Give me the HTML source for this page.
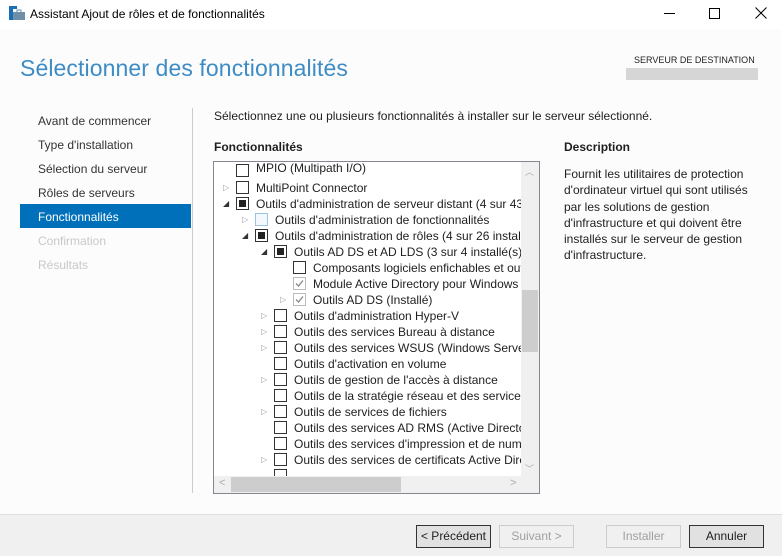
<!DOCTYPE html>
<html><head><meta charset="utf-8"><style>
*{margin:0;padding:0;box-sizing:border-box}
body{width:782px;height:556px;overflow:hidden;background:#fff;font-family:"Liberation Sans",sans-serif;font-size:12px;color:#1e1e1e;position:relative}
.a{position:absolute;white-space:nowrap}
.nav{left:38px;font-size:12px;color:#333}
.row{position:absolute;height:16px;line-height:16px;white-space:nowrap}
.cb{position:absolute;width:13px;height:13px;border:1px solid #333;background:#fff;top:1px}
.cb.f::after{content:"";position:absolute;left:2px;top:2px;width:7px;height:7px;background:#222}
.cb.g{border-color:#bbb}
.cb.b{border-color:#9cc3e6;background:#f2f8fd}
.ex{position:absolute;font-size:8px;color:#999;top:0}
.btn{position:absolute;top:525px;height:23px;border:1px solid #adadad;background:#e1e1e1;text-align:center;line-height:21px;font-size:12px}
</style></head><body>
<svg class="a" style="left:9px;top:6px" width="16" height="14"><rect x="0" y="0" width="4" height="14" fill="#1b6fb5"/><rect x="0" y="0" width="8" height="3" fill="#1b6fb5"/><rect x="4" y="6" width="12" height="8" fill="#6f8ea8"/><rect x="8" y="4" width="4" height="3" fill="none" stroke="#6f8ea8"/></svg>
<div class="a" style="left:30px;top:7px;font-size:12px;color:#000">Assistant Ajout de rôles et de fonctionnalités</div>
<div class="a" style="left:664px;top:13px;width:11px;height:1px;background:#000"></div>
<div class="a" style="left:709px;top:8px;width:11px;height:11px;border:1px solid #000"></div>
<svg class="a" style="left:755px;top:7px" width="12" height="12"><path d="M0.5 0.5L11.5 11.5M11.5 0.5L0.5 11.5" stroke="#000"/></svg>
<div class="a" style="left:0;top:29px;width:782px;height:485px;background:#fcfcfc"></div>
<div class="a" style="left:20px;top:55px;font-size:23px;color:#3d8cc6;letter-spacing:0.1px">Sélectionner des fonctionnalités</div>
<div class="a" style="left:634px;top:55px;font-size:9px;color:#222">SERVEUR DE DESTINATION</div>
<div class="a" style="left:626px;top:68px;width:132px;height:12px;background:#d6d6d6"></div>
<div class="a nav" style="top:114px">Avant de commencer</div>
<div class="a nav" style="top:138px">Type d'installation</div>
<div class="a nav" style="top:162px">Sélection du serveur</div>
<div class="a nav" style="top:186px">Rôles de serveurs</div>
<div class="a" style="left:20px;top:204px;width:171px;height:24px;background:#0070bb"></div>
<div class="a nav" style="top:210px;color:#fff">Fonctionnalités</div>
<div class="a nav" style="top:234px;color:#c8c8c8">Confirmation</div>
<div class="a nav" style="top:258px;color:#c8c8c8">Résultats</div>
<div class="a" style="left:192px;top:108px;width:1px;height:385px;background:#ccc"></div>
<div class="a" style="left:214px;top:109px">Sélectionnez une ou plusieurs fonctionnalités à installer sur le serveur sélectionné.</div>
<div class="a" style="left:214px;top:140px;font-weight:bold">Fonctionnalités</div>
<div class="a" style="left:564px;top:140px;font-weight:bold">Description</div>
<div class="a" style="left:564px;top:166px;line-height:16.3px;white-space:normal;width:200px">Fournit les utilitaires de protection d'ordinateur virtuel qui sont utilisés par les solutions de gestion d'infrastructure et qui doivent être installés sur le serveur de gestion d'infrastructure.</div>
<div class="a" style="left:213px;top:161px;width:327px;height:333px;border:1px solid #828790;background:#fff;overflow:hidden">
<div style="position:absolute;left:0;top:0;width:307px;height:314px;overflow:hidden">
<div class="row" style="top:-2px;left:22px"><div class="cb" style="left:0;top:4px"></div><span style="position:absolute;left:20px">MPIO (Multipath I/O)</span></div>
<div class="row" style="top:18px;left:0"><span class="ex" style="left:9px">▷</span><div class="cb" style="left:22px"></div><span style="position:absolute;left:42px">MultiPoint Connector</span></div>
<div class="row" style="top:34px;left:0"><span class="ex" style="left:9px;color:#333">◢</span><div class="cb f" style="left:22px"></div><span style="position:absolute;left:42px">Outils d'administration de serveur distant (4 sur 43 installé(s))</span></div>
<div class="row" style="top:50px;left:19px"><span class="ex" style="left:9px">▷</span><div class="cb b" style="left:22px"></div><span style="position:absolute;left:42px">Outils d'administration de fonctionnalités</span></div>
<div class="row" style="top:66px;left:19px"><span class="ex" style="left:9px;color:#333">◢</span><div class="cb f" style="left:22px"></div><span style="position:absolute;left:42px">Outils d'administration de rôles (4 sur 26 installé(s))</span></div>
<div class="row" style="top:82px;left:38px"><span class="ex" style="left:9px;color:#333">◢</span><div class="cb f" style="left:22px"></div><span style="position:absolute;left:42px">Outils AD DS et AD LDS (3 sur 4 installé(s))</span></div>
<div class="row" style="top:98px;left:57px"><div class="cb" style="left:22px"></div><span style="position:absolute;left:42px">Composants logiciels enfichables et outils</span></div>
<div class="row" style="top:114px;left:57px"><div class="cb g" style="left:22px"><svg width="11" height="11" style="position:absolute;left:0;top:0"><path d="M2 5.5L4.5 8L9 2.5" stroke="#888" stroke-width="1.3" fill="none"/></svg></div><span style="position:absolute;left:42px">Module Active Directory pour Windows PowerShell</span></div>
<div class="row" style="top:130px;left:57px"><span class="ex" style="left:9px">▷</span><div class="cb g" style="left:22px"><svg width="11" height="11" style="position:absolute;left:0;top:0"><path d="M2 5.5L4.5 8L9 2.5" stroke="#888" stroke-width="1.3" fill="none"/></svg></div><span style="position:absolute;left:42px">Outils AD DS (Installé)</span></div>
<div class="row" style="top:146px;left:38px"><span class="ex" style="left:9px">▷</span><div class="cb" style="left:22px"></div><span style="position:absolute;left:42px">Outils d'administration Hyper-V</span></div>
<div class="row" style="top:162px;left:38px"><span class="ex" style="left:9px">▷</span><div class="cb" style="left:22px"></div><span style="position:absolute;left:42px">Outils des services Bureau à distance</span></div>
<div class="row" style="top:178px;left:38px"><span class="ex" style="left:9px">▷</span><div class="cb" style="left:22px"></div><span style="position:absolute;left:42px">Outils des services WSUS (Windows Server Update)</span></div>
<div class="row" style="top:194px;left:38px"><div class="cb" style="left:22px"></div><span style="position:absolute;left:42px">Outils d'activation en volume</span></div>
<div class="row" style="top:210px;left:38px"><span class="ex" style="left:9px">▷</span><div class="cb" style="left:22px"></div><span style="position:absolute;left:42px">Outils de gestion de l'accès à distance</span></div>
<div class="row" style="top:226px;left:38px"><div class="cb" style="left:22px"></div><span style="position:absolute;left:42px">Outils de la stratégie réseau et des services d'accès</span></div>
<div class="row" style="top:242px;left:38px"><span class="ex" style="left:9px">▷</span><div class="cb" style="left:22px"></div><span style="position:absolute;left:42px">Outils de services de fichiers</span></div>
<div class="row" style="top:258px;left:38px"><div class="cb" style="left:22px"></div><span style="position:absolute;left:42px">Outils des services AD RMS (Active Directory)</span></div>
<div class="row" style="top:274px;left:38px"><div class="cb" style="left:22px"></div><span style="position:absolute;left:42px">Outils des services d'impression et de numérisation</span></div>
<div class="row" style="top:290px;left:38px"><span class="ex" style="left:9px">▷</span><div class="cb" style="left:22px"></div><span style="position:absolute;left:42px">Outils des services de certificats Active Directory</span></div>
<div class="row" style="top:306px;left:38px"><div class="cb" style="left:22px"></div></div>
</div>
<div style="position:absolute;left:307px;top:0;width:18px;height:314px;background:#f0f0f0"></div>
<div style="position:absolute;left:308px;top:128px;width:16px;height:62px;background:#cdcdcd"></div>
<div style="position:absolute;left:311px;top:3px;font-size:9px;color:#aaa">︿</div>
<div style="position:absolute;left:311px;top:300px;font-size:9px;color:#aaa">﹀</div>
<div style="position:absolute;left:0;top:314px;width:325px;height:17px;background:#f0f0f0"></div>
<div style="position:absolute;left:17px;top:315px;width:170px;height:15px;background:#cdcdcd"></div>
<div style="position:absolute;left:5px;top:315px;font-size:11px;color:#aaa">&lt;</div>
<div style="position:absolute;left:296px;top:315px;font-size:11px;color:#aaa">&gt;</div>
</div>
<div class="a" style="left:0;top:514px;width:782px;height:42px;background:#f0f0f0;border-top:1px solid #dfdfdf"></div>
<div class="btn" style="left:416px;width:75px;border-color:#333">&lt; Précédent</div>
<div class="btn" style="left:499px;width:75px;background:#f0f0f0;border-color:#ccc;color:#a0a0a0">Suivant &gt;</div>
<div class="btn" style="left:606px;width:75px;background:#f0f0f0;border-color:#ccc;color:#a0a0a0">Installer</div>
<div class="btn" style="left:689px;width:75px;border-color:#333">Annuler</div>
</body></html>
